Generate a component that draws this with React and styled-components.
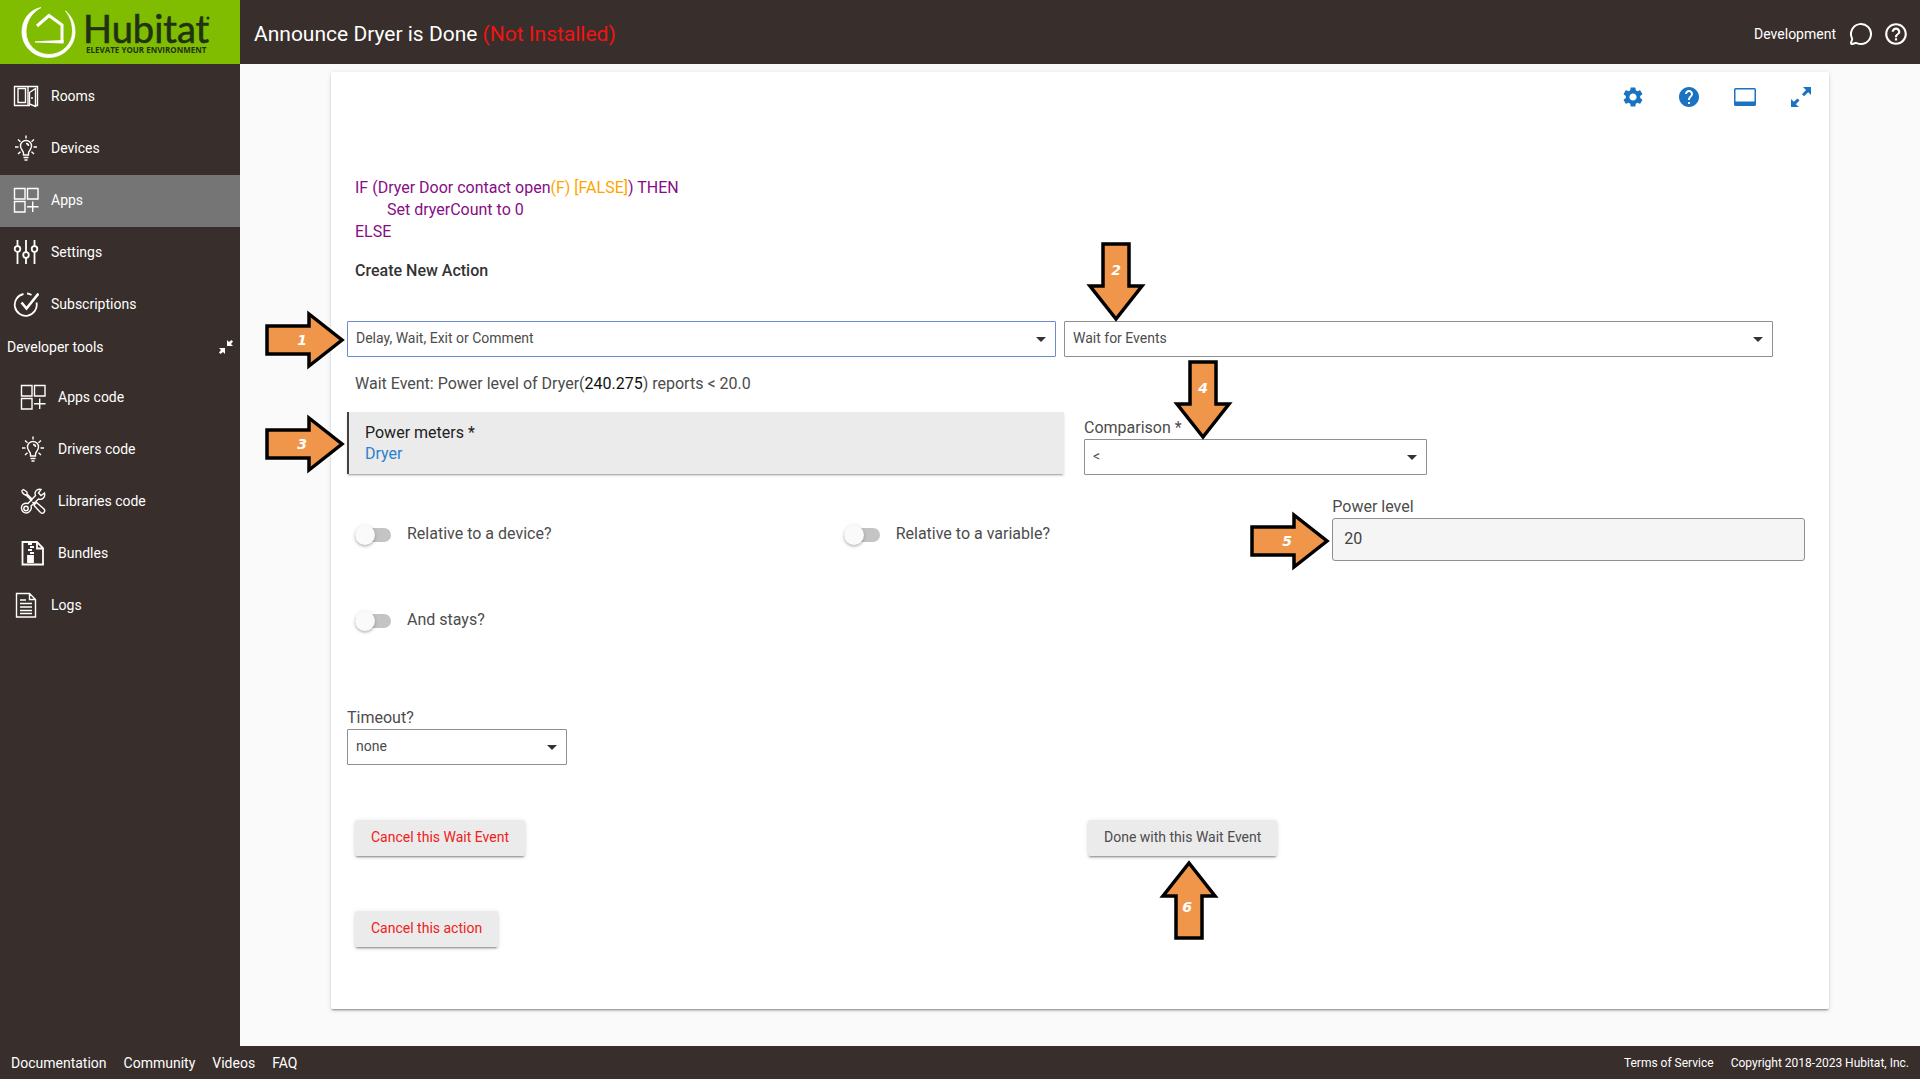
import React from "react";
import styled, { createGlobalStyle, css } from "styled-components";
import { MdSettings, MdHelp, MdHelpOutline } from "react-icons/md";
import { MessageCircle } from "lucide-react";

const GlobalStyle = createGlobalStyle`
  * {
    box-sizing: border-box;
  }
  body {
    margin: 0;
    background: #fafafa;
    color: #4c4c4c;
    font-family: Roboto, "Liberation Sans", sans-serif;
    font-size: 16px;
    line-height: 22px;
  }
`;

const Page = styled.div`
  display: grid;
  grid-template-columns: 240px 1fr;
  grid-template-rows: 64px 1fr 33px;
  min-height: 100vh;
`;

const LogoLink = styled.a`
  display: block;
  background: #80bc00;
`;

const Header = styled.header`
  display: flex;
  align-items: center;
  justify-content: space-between;
  padding: 3px 11px 0 14px;
  background: #382e2b;
  color: #fff;
`;

const Title = styled.h1`
  margin: 0;
  font-size: 21px;
  font-weight: 400;
  line-height: 24px;
`;

const NotInstalled = styled.span`
  color: #f01414;
`;

const HeaderTools = styled.div`
  display: flex;
  align-items: center;
  gap: 10px;
`;

const HubName = styled.span`
  padding-right: 3px;
  font-size: 14px;
`;

const IconButton = styled.button`
  display: flex;
  padding: 0;
  border: 0;
  background: none;
  color: inherit;
  cursor: pointer;
`;

const Sidebar = styled.nav`
  padding-top: 7px;
  background: #382e2b;
  color: #fff;
`;

const NavItem = styled.a`
  display: flex;
  align-items: center;
  gap: 12px;
  height: 52px;
  padding-bottom: 2px;
  padding-left: ${({ $nested }) => ($nested ? "20px" : "13px")};
  background: ${({ $active }) => ($active ? "#757575" : "none")};
  color: #fff;
  font-size: 14px;
  text-decoration: none;
  svg {
    width: 26px;
    height: 26px;
  }
`;

const NavGroup = styled.div`
  display: flex;
  align-items: center;
  justify-content: space-between;
  height: 41px;
  padding: 0 6px 9px 7px;
  font-size: 14px;
`;

const Main = styled.main`
  display: flex;
  flex-direction: column;
  padding: 8px 91px 37px;
`;

const Card = styled.form`
  flex: 1;
  padding: 13px 16px 61px;
  border-radius: 2px;
  background: #fff;
  box-shadow: 0 2px 2px 0 rgba(0, 0, 0, 0.14), 0 3px 1px -2px rgba(0, 0, 0, 0.2),
    0 1px 5px 0 rgba(0, 0, 0, 0.12);
`;

const CardTools = styled.div`
  display: flex;
  justify-content: flex-end;
  gap: 32px;
  margin-bottom: 68px;
  color: #1a73c2;
`;

const Rule = styled.div`
  padding-left: 8px;
  color: #860d86;
`;

const RuleLine = styled.div`
  padding-left: ${({ $indent }) => ($indent ? "32px" : "0")};
`;

const RuleState = styled.span`
  color: orange;
`;

const Heading = styled.h2`
  margin: 17px 0 39px;
  padding-left: 8px;
  color: #333;
  font-size: 16px;
  font-weight: 500;
  line-height: 22px;
`;

const SelectRow = styled.div`
  display: grid;
  grid-template-columns: 1fr 1fr;
  gap: 8px;
  margin-right: 40px;
`;

const Summary = styled.p`
  margin: 16px 0 17px;
  padding-left: 8px;
  b {
    color: #111;
    font-weight: 400;
  }
`;

const MeterRow = styled.div`
  display: grid;
  grid-template-columns: calc(50% - 16px) calc(25% - 24px);
  align-items: start;
  gap: 20px;
  margin-bottom: 21px;
`;

const MeterButton = styled.button`
  display: block;
  width: 100%;
  height: 62px;
  padding: 0 16px;
  border: 0;
  border-left: 2px solid #424242;
  background: #ebebeb;
  box-shadow: 0 2px 2px 0 rgba(0, 0, 0, 0.14), 0 3px 1px -2px rgba(0, 0, 0, 0.2);
  color: #212121;
  font: 400 16px / 21px Roboto, "Liberation Sans", sans-serif;
  text-align: left;
  cursor: pointer;
`;

const MeterValue = styled.span`
  display: block;
  color: #2a80cc;
`;

const Field = styled.div`
  display: flex;
  flex-direction: column;
  padding-top: ${({ $top }) => ($top ? "5px" : "0")};
`;

const SelectBox = styled.div`
  position: relative;
  width: ${({ $width }) => $width || "100%"};
  &::after {
    content: "";
    position: absolute;
    top: 16px;
    right: 10px;
    border: 5px solid transparent;
    border-top-color: #333;
    border-bottom: 0;
    pointer-events: none;
  }
`;

const Select = styled.select`
  display: block;
  width: 100%;
  height: 36px;
  padding: 0 24px 2px 8px;
  appearance: none;
  border: 1px solid ${({ $focused }) => ($focused ? "#6c8bd0" : "#8f8f8f")};
  border-radius: 1px;
  background: #fff;
  color: #4c4c4c;
  font: 400 14px / 20px Roboto, "Liberation Sans", sans-serif;
`;

const TextInput = styled.input`
  width: 100%;
  height: 43px;
  padding: 0 11px 2px;
  border: 1px solid #8f8f8f;
  border-radius: 3px;
  background: #f5f5f5;
  color: #424242;
  font: 400 16px / 22px Roboto, "Liberation Sans", sans-serif;
`;

const Thirds = styled.div`
  display: grid;
  grid-template-columns: repeat(3, 1fr);
  gap: 48px 16px;
  padding: 0 8px;
`;

const SwitchLabel = styled.label`
  display: flex;
  align-items: center;
  gap: 16px;
  height: 22px;
  margin-top: ${({ $offset }) => ($offset ? "27px" : "0")};
`;

const Switch = styled.input`
  position: relative;
  width: 36px;
  height: 14px;
  margin: 2px 0 0;
  appearance: none;
  border-radius: 14px;
  background: #c4c4c4;
  &::before {
    content: "";
    position: absolute;
    top: -3px;
    left: 0;
    width: 20px;
    height: 20px;
    border-radius: 50%;
    background: #fafafa;
    box-shadow: 0 2px 2px 0 rgba(0, 0, 0, 0.14), 0 1px 4px 0 rgba(0, 0, 0, 0.16);
  }
`;

const Timeout = styled(Field)`
  margin: 76px 0 55px;
`;

const ButtonGrid = styled.div`
  display: grid;
  grid-template-columns: 1fr 1fr;
  gap: 55px 16px;
  padding: 0 8px;
`;

const Button = styled.button`
  display: block;
  height: 36px;
  padding: 0 16px 2px;
  border: 0;
  border-radius: 2px;
  background: #ebebeb;
  box-shadow: 0 2px 2px 0 rgba(0, 0, 0, 0.14), 0 3px 1px -2px rgba(0, 0, 0, 0.2),
    0 1px 5px 0 rgba(0, 0, 0, 0.12);
  color: ${({ $danger }) => ($danger ? "#f02020" : "#4c4c4c")};
  font: 400 14px / 20px Roboto, "Liberation Sans", sans-serif;
  cursor: pointer;
`;

const Pointed = styled.div`
  position: relative;
  justify-self: start;
  width: ${({ $fill }) => ($fill ? "100%" : "auto")};
`;

const arrowPlaces = {
  right: css`
    top: calc(50% - 28px);
    right: calc(100% + 2px);
  `,
  down: css`
    bottom: calc(100% - 1px);
    left: ${({ $at }) => $at};
  `,
  up: css`
    top: calc(100% + 4px);
    left: ${({ $at }) => $at};
  `,
};

const ArrowSvg = styled.svg`
  position: absolute;
  z-index: 1;
  overflow: visible;
  pointer-events: none;
  ${({ $dir }) => arrowPlaces[$dir]}
`;

const ArrowText = styled.text`
  fill: #fff;
  font: italic 700 14px "DejaVu Sans", sans-serif;
  text-anchor: middle;
`;

const Footer = styled.footer`
  grid-column: 1 / -1;
  display: flex;
  align-items: center;
  justify-content: space-between;
  padding: 0 11px;
  background: #382e2b;
  color: #fff;
`;

const FooterLinks = styled.div`
  display: flex;
  gap: 17px;
  font-size: ${({ $small }) => ($small ? "12px" : "14px")};
`;

const FooterLink = styled.a`
  color: #fff;
  text-decoration: none;
`;

const LogoName = styled.text`
  fill: #1f3314;
  stroke: #1f3314;
  stroke-width: 0.6;
  font: 400 38px Lato, sans-serif;
`;

const LogoTag = styled.text`
  fill: #1f3314;
  font: 700 8px "Open Sans", sans-serif;
`;

const Logo = () => (
  <svg width="240" height="64" viewBox="0 0 240 64" role="img" aria-label="Hubitat">
    <path
      d="M41 7.500C29 10 22 20 22 32c0 14 11.500 25.500 26.500 25.500S75 46 75 32c0-9-3.500-16-9.500-21 5 6 7 13 7 20.500C72.500 44 62 54.500 49 54.500S26 44 26 32C26 22 31 13 41 7.500z"
      fill="#fff"
      stroke="#fff"
      strokeWidth="0.800"
    />
    <path d="M37 26l12-10.500L62 25v17.500" fill="none" stroke="#fff" strokeWidth="3" />
    <path d="M63.500 40v3.500L35 42.500v-1.200z" fill="#fff" />
    <LogoName x="83" y="43">Hubitat</LogoName>
    <circle cx="208" cy="18" r="1.500" fill="#1f3314" />
    <LogoTag x="86" y="53">ELEVATE YOUR ENVIRONMENT</LogoTag>
  </svg>
);

const Line = ({ children, width = 1.4 }) => (
  <svg
    viewBox="0 0 26 26"
    fill="none"
    stroke="currentColor"
    strokeWidth={width}
    aria-hidden="true"
  >
    {children}
  </svg>
);

const RoomsIcon = () => (
  <Line>
    <path d="M17 22.500H1.500v-19h23v19H22" />
    <path d="M5 5.500h7.500v14H5zM15 4v18" />
    <path d="M16.500 9.500l6-4v18l-6-2.500zM19 14v2" />
  </Line>
);

const BulbIcon = () => (
  <Line>
    <path d="M10.500 20v-2c0-2-3-3.500-3-7a5.500 5.500 0 0 1 11 0c0 3.500-3 5-3 7v2zM10.500 22.500h5M11.500 25h3M13 8.500c1.500 0 2.500 1 2.500 2.500" />
    <path d="M13 .5v3M2 12h3.500M20.500 12H24M5 4.500l2.500 2.300M21 4.500l-2.500 2.300M5 19l2.500-2.300M21 19l-2.500-2.300" />
  </Line>
);

const AppsIcon = () => (
  <Line>
    <path d="M1.500 1.500h10.500v10.500H1.500zM14.500 1.500H25v10.500H14.500zM1.500 14.500h10.500V25H1.500zM19.700 14.500V25M14 19.700h11.500" />
  </Line>
);

const SettingsIcon = () => (
  <Line width={1.800}>
    <path d="M4.500 1v6M4.500 13v12M13 1v12M13 19v6M21.500 1v6M21.500 13v12" />
    <circle cx="4.500" cy="10" r="2.800" />
    <circle cx="13" cy="16" r="2.800" />
    <circle cx="21.500" cy="10" r="2.800" />
  </Line>
);

const CheckIcon = () => (
  <Line width={1.800}>
    <path d="M10.500 3A11 11 0 1 0 23.500 11.500" />
    <path d="M14 2.500c1.500 0 3 .5 4.500 1.500" />
    <path d="M8.500 11.500l5 6L25.500 2.500" strokeWidth="2.600" />
  </Line>
);

const ToolsIcon = () => (
  <Line>
    <path d="M1.500 3l2-1.500L7 4v2l5 5M14.500 16l-2-2M6.500 7.500l-3-1.500-2-3M6 7l6 6" />
    <path d="M15 16l1.500-1.500 7.500 6.500c2 2.500-1 5.500-3.500 3.500L14 17.500z" />
    <path d="M24.500 5l-3.500 2.500-2.500-2.500L21 1.500c-4-1-7 2-5.500 6L8 15.500c-4-1-7 1.500-6.500 5 .5 4 5 6 8 3s1.500-4 1.500-5.500L18.500 11c4 1.500 7-2 6-6z" />
    <circle cx="6" cy="20.500" r="2.200" />
  </Line>
);

const BundleIcon = () => (
  <Line width={1.800}>
    <path d="M2.500 2h14.500l6 6v16.500H2.500zM17 2v6.500h6" />
    <path d="M8 4h4M10 7h4M8 10h4M10 13h4" />
    <path d="M8 16h5v6H8z" fill="currentColor" />
  </Line>
);

const LogsIcon = () => (
  <Line>
    <path d="M3.500 1.500h13l6 6V25h-19zM16.500 1.500v6h6M7 8h6M7 11.500h12M7 15h12M7 18.500h12M7 21.500h12" />
  </Line>
);

const CompressIcon = () => (
  <svg width="16" height="16" viewBox="0 0 16 16" fill="currentColor" aria-hidden="true">
    <path d="M9 7V1l2 2L13.500 1 15 2.500 13 5l2 2zM7 9v6l-2-2-2.500 2L1 13.500 3 11 1 9z" />
  </svg>
);

const ExpandIcon = () => (
  <svg width="24" height="24" viewBox="0 0 24 24" fill="currentColor" aria-hidden="true">
    <path d="M22 2v8l-2.800-2.800-4.200 4-2-2 4-4.200L14 2zM2 22v-8l2.800 2.800L8.500 13.500l2 2-3.700 3.700L10 22z" />
  </svg>
);

const PanelIcon = () => (
  <svg width="24" height="24" viewBox="0 0 24 24" fill="currentColor" aria-hidden="true">
    <path
      fillRule="evenodd"
      d="M2.500 3h19A1.500 1.500 0 0 1 23 4.500v15a1.500 1.500 0 0 1-1.500 1.500h-19A1.500 1.500 0 0 1 1 19.500v-15A1.500 1.500 0 0 1 2.500 3zm0 1.500v12h19v-12z"
    />
  </svg>
);

const shapes = {
  right: { w: 80, h: 58, points: "2,15 44,15 44,3 77,29 44,55 44,43 2,43", x: 37, y: 34 },
  down: { w: 58, h: 80, points: "16,2 42,2 42,44 55,44 29,77 3,44 16,44", x: 29, y: 33 },
  up: { w: 58, h: 80, points: "16,78 42,78 42,36 55,36 29,3 3,36 16,36", x: 27, y: 52 },
};

const Arrow = ({ dir, at, step }) => {
  const { w, h, points, x, y } = shapes[dir];

  return (
    <ArrowSvg $dir={dir} $at={at} width={w} height={h} viewBox={`0 0 ${w} ${h}`}>
      <polygon points={points} fill="#f0964a" stroke="#000" strokeWidth="3.500" />
      <ArrowText x={x} y={y}>
        {step}
      </ArrowText>
    </ArrowSvg>
  );
};

const Dropdown = ({ id, value, width, focused, label }) => (
  <SelectBox $width={width}>
    <Select id={id} aria-label={label} $focused={focused}>
      <option>{value}</option>
    </Select>
  </SelectBox>
);

const mainLinks = [
  { name: "Rooms", Icon: RoomsIcon },
  { name: "Devices", Icon: BulbIcon },
  { name: "Apps", Icon: AppsIcon, active: true },
  { name: "Settings", Icon: SettingsIcon },
  { name: "Subscriptions", Icon: CheckIcon },
];

const devLinks = [
  { name: "Apps code", Icon: AppsIcon },
  { name: "Drivers code", Icon: BulbIcon },
  { name: "Libraries code", Icon: ToolsIcon },
  { name: "Bundles", Icon: BundleIcon },
];

const App = () => {
  const renderLinks = (links, nested) =>
    links.map(({ name, Icon, active }) => (
      <NavItem href="#" key={name} $active={active} $nested={nested}>
        <Icon />
        {name}
      </NavItem>
    ));

  return (
    <Page>
      <GlobalStyle />
      <LogoLink href="#">
        <Logo />
      </LogoLink>
      <Header>
        <Title>
          Announce Dryer is Done <NotInstalled>(Not Installed)</NotInstalled>
        </Title>
        <HeaderTools>
          <HubName>Development</HubName>
          <IconButton aria-label="Messages">
            <MessageCircle size={24} strokeWidth={2} />
          </IconButton>
          <IconButton aria-label="Help">
            <MdHelpOutline size={26} />
          </IconButton>
        </HeaderTools>
      </Header>

      <Sidebar>
        {renderLinks(mainLinks)}
        <NavGroup>
          Developer tools
          <IconButton aria-label="Collapse developer tools">
            <CompressIcon />
          </IconButton>
        </NavGroup>
        {renderLinks(devLinks, true)}
        {renderLinks([{ name: "Logs", Icon: LogsIcon }])}
      </Sidebar>

      <Main>
        <Card onSubmit={(e) => e.preventDefault()}>
          <CardTools>
            <IconButton type="button" aria-label="Settings">
              <MdSettings size={24} />
            </IconButton>
            <IconButton type="button" aria-label="Help">
              <MdHelp size={24} />
            </IconButton>
            <IconButton type="button" aria-label="Show panel">
              <PanelIcon />
            </IconButton>
            <IconButton type="button" aria-label="Expand">
              <ExpandIcon />
            </IconButton>
          </CardTools>

          <Rule>
            <RuleLine>
              IF (Dryer Door contact open<RuleState>(F) [FALSE]</RuleState>) THEN
            </RuleLine>
            <RuleLine $indent>Set dryerCount to 0</RuleLine>
            <RuleLine>ELSE</RuleLine>
          </Rule>
          <Heading>Create New Action</Heading>

          <SelectRow>
            <Pointed $fill>
              <Dropdown label="Action type" value="Delay, Wait, Exit or Comment" focused />
              <Arrow dir="right" step="1" />
            </Pointed>
            <Pointed $fill>
              <Dropdown label="Action" value="Wait for Events" />
              <Arrow dir="down" at="23px" step="2" />
            </Pointed>
          </SelectRow>

          <Summary>
            Wait Event: Power level of Dryer(<b>240.275</b>) reports &lt; 20.0
          </Summary>

          <MeterRow>
            <Pointed $fill>
              <MeterButton type="button">
                Power meters *<MeterValue>Dryer</MeterValue>
              </MeterButton>
              <Arrow dir="right" step="3" />
            </Pointed>
            <Field $top>
              <label htmlFor="comparison">Comparison *</label>
              <Pointed $fill>
                <Dropdown id="comparison" value="<" />
                <Arrow dir="down" at="90px" step="4" />
              </Pointed>
            </Field>
          </MeterRow>

          <Thirds>
            <SwitchLabel $offset>
              <Switch type="checkbox" />
              Relative to a device?
            </SwitchLabel>
            <SwitchLabel $offset>
              <Switch type="checkbox" />
              Relative to a variable?
            </SwitchLabel>
            <Field>
              <label htmlFor="power-level">Power level</label>
              <Pointed $fill>
                <TextInput id="power-level" defaultValue="20" />
                <Arrow dir="right" step="5" />
              </Pointed>
            </Field>
            <SwitchLabel>
              <Switch type="checkbox" />
              And stays?
            </SwitchLabel>
          </Thirds>

          <Timeout>
            <label htmlFor="timeout">Timeout?</label>
            <Dropdown id="timeout" value="none" width="220px" />
          </Timeout>

          <ButtonGrid>
            <Pointed>
              <Button type="button" $danger>
                Cancel this Wait Event
              </Button>
            </Pointed>
            <Pointed>
              <Button type="submit">Done with this Wait Event</Button>
              <Arrow dir="up" at="72px" step="6" />
            </Pointed>
            <Pointed>
              <Button type="button" $danger>
                Cancel this action
              </Button>
            </Pointed>
          </ButtonGrid>
        </Card>
      </Main>

      <Footer>
        <FooterLinks>
          <FooterLink href="#">Documentation</FooterLink>
          <FooterLink href="#">Community</FooterLink>
          <FooterLink href="#">Videos</FooterLink>
          <FooterLink href="#">FAQ</FooterLink>
        </FooterLinks>
        <FooterLinks $small>
          <FooterLink href="#">Terms of Service</FooterLink>
          <span>Copyright 2018-2023 Hubitat, Inc.</span>
        </FooterLinks>
      </Footer>
    </Page>
  );
};

export default App;
